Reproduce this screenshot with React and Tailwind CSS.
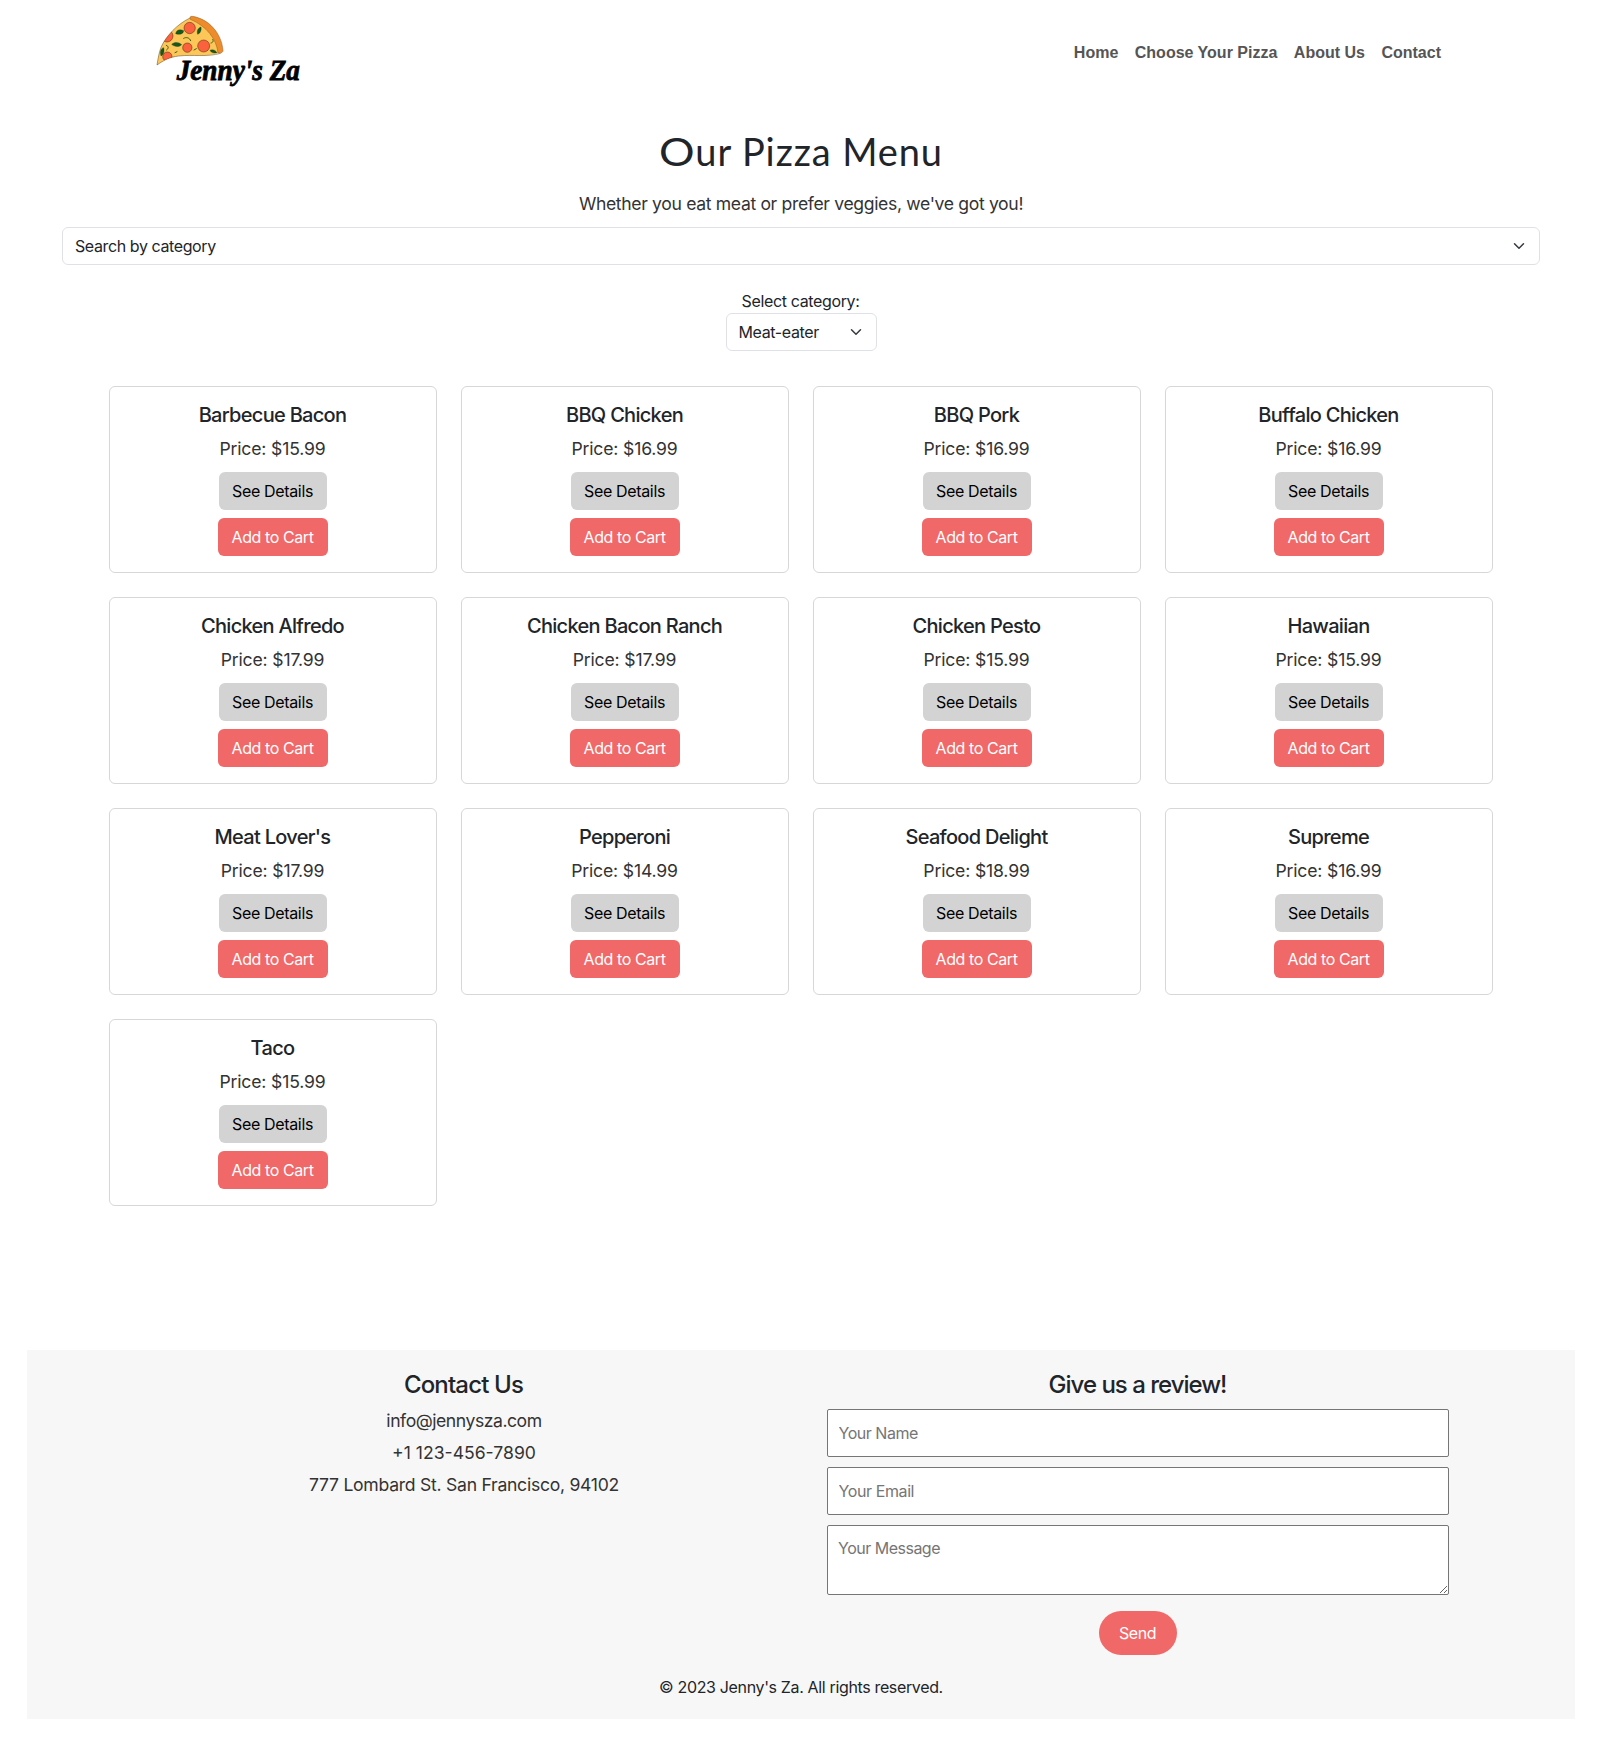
import React from 'react';

const pizzas = [
  ['Barbecue Bacon', '15.99'],
  ['BBQ Chicken', '16.99'],
  ['BBQ Pork', '16.99'],
  ['Buffalo Chicken', '16.99'],
  ['Chicken Alfredo', '17.99'],
  ['Chicken Bacon Ranch', '17.99'],
  ['Chicken Pesto', '15.99'],
  ['Hawaiian', '15.99'],
  ["Meat Lover's", '17.99'],
  ['Pepperoni', '14.99'],
  ['Seafood Delight', '18.99'],
  ['Supreme', '16.99'],
  ['Taco', '15.99'],
];

function Logo() {
  return (
    <svg width="180" height="100" viewBox="0 0 540 300" aria-label="Jenny's Za">
      <defs>
        <clipPath id="slice">
          <path d="M150 54 C112 72 78 108 63 142 C57 158 54 176 51 195 C72 180 90 171 116 168 C160 163 200 172 238 159 C232 120 205 72 150 54 Z" />
        </clipPath>
      </defs>
      <path
        d="M150 54 C112 72 78 108 63 142 C57 158 54 176 51 195 C72 180 90 171 116 168 C160 163 200 172 238 159 C232 120 205 72 150 54 Z"
        fill="#fdc659"
      />
      <g clipPath="url(#slice)" stroke="#4a2a12" strokeWidth="1.5">
        <circle cx="149" cy="84" r="17" fill="#fb613c" />
        <circle cx="81" cy="108" r="18" fill="#fb613c" />
        <circle cx="191" cy="138" r="18" fill="#fb613c" />
        <circle cx="142" cy="143" r="14" fill="#fb613c" />
        <circle cx="82" cy="170" r="14" fill="#fb613c" />
      </g>
      <g fill="#15591f" stroke="#0c3a12" strokeWidth="1">
        <path d="M107 101 C109 89 120 87 131 92 C131 101 118 106 107 101 Z" />
        <path d="M173 103 C169 92 175 83 183 81 C185 91 181 100 173 103 Z" />
        <path d="M95 133 C104 125 116 126 125 134 C116 142 104 141 95 133 Z" />
        <path d="M63 168 C59 156 62 145 71 143 C74 154 71 164 63 168 Z" />
        <path d="M210 151 C217 147 226 150 231 158 C222 161 213 158 210 151 Z" />
      </g>
      <g fill="none" stroke="#35621c" strokeWidth="3" strokeLinecap="round">
        <path d="M131 115 C139 110 149 113 152 122" />
        <path d="M79 136 C87 139 86 145 80 150" />
        <path d="M213 129 C220 128 221 122 218 118" />
        <path d="M105 158 L111 155" />
        <path d="M162 150 L169 146" />
      </g>
      <path
        d="M150 54 C112 72 78 108 63 142 C57 158 54 176 51 195 C72 180 90 171 116 168 C160 163 200 172 242 160"
        fill="none"
        stroke="#5d4320"
        strokeWidth="1.5"
      />
      <path
        d="M151 58 C148 52 151 48 157 49 C205 56 244 98 249 151 C249 157 245 160 234 159 C230 118 200 78 151 58 Z"
        fill="#ee8c2b"
        stroke="#8a5a26"
        strokeWidth="1.5"
      />
      <text
        x="110"
        y="240"
        textLength="370"
        lengthAdjust="spacingAndGlyphs"
        className="font-['Liberation_Serif',serif] text-[88px] font-bold italic"
        fill="#000"
        stroke="#000"
        strokeWidth="2.5"
      >
        Jenny's Za
      </text>
    </svg>
  );
}

function Chevron() {
  return (
    <svg width="16" height="12" viewBox="0 0 16 16" preserveAspectRatio="xMidYMid meet" className="shrink-0">
      <path fill="none" stroke="#343a40" strokeLinecap="round" strokeLinejoin="round" strokeWidth="2" d="m2 5 6 6 6-6" />
    </svg>
  );
}

function SelectBox({ label, width }) {
  return (
    <button
      type="button"
      className={`flex h-[38px] items-center justify-between rounded-md border border-[#dee2e6] bg-white pr-3 pl-3 text-base ${width}`}
    >
      <span>{label}</span>
      <Chevron />
    </button>
  );
}

function Card({ name, price }) {
  return (
    <div className="flex h-[187px] flex-col items-center rounded-md border border-[#d7d7d8] bg-white py-4">
      <h5 className="mb-2 pr-px text-[20px] leading-6 font-medium tracking-[-0.7px]">{name}</h5>
      <p className="mb-2.5 pr-px text-[17.6px] leading-[27px] tracking-[-0.16px] text-[#333]">Price: ${price}</p>
      <button className="mb-2 h-[38px] w-[108px] shrink-0 rounded-md bg-[#d3d3d3] pr-px text-base tracking-[-0.34px] text-black">
        See Details
      </button>
      <button className="h-[38px] w-[110px] shrink-0 rounded-md bg-[#f06868] pr-px text-base tracking-[-0.41px] text-white">
        Add to Cart
      </button>
    </div>
  );
}

export default function App() {
  return (
    <div className="h-[1746px] w-[1602px] bg-white font-['Inter',sans-serif] text-[#212529]">
      <header className="flex h-[127px] items-start justify-between pr-[161px] pl-[140px]">
        <Logo />
        <nav className="mt-[41px] flex gap-[16.5px] font-['Liberation_Sans',sans-serif] text-base font-bold text-[#555]">
          <a>Home</a>
          <a>Choose Your Pizza</a>
          <a>About Us</a>
          <a>Contact</a>
        </nav>
      </header>

      <main className="flex h-[1223px] flex-col items-center">
        <h1 className="font-['Lato',sans-serif] text-[38px] leading-[48px] tracking-[0.9px]">
          <span className="mr-[5px] inline-block origin-left scale-x-[1.17]">O</span>ur Pizza Menu
        </h1>
        <p className="mt-[15px] mb-[10px] text-[17.6px] leading-[27px] tracking-[-0.35px] text-[#333]">
          Whether you eat meat or prefer veggies, we've got you!
        </p>
        <div className="flex tracking-[-0.4px]">
          <SelectBox label="Search by category" width="w-[1478px]" />
        </div>
        <label className="mt-6 pr-px text-base tracking-[-0.36px]">Select category:</label>
        <div className="flex tracking-[-0.37px]">
          <SelectBox label="Meat-eater" width="w-[151px]" />
        </div>
        <div className="mt-[35px] grid w-[1384px] grid-cols-4 gap-6 text-center">
          {pizzas.map(([name, price]) => (
            <Card key={name} name={name} price={price} />
          ))}
        </div>
      </main>

      <footer className="mx-[27px] h-[369px] bg-[#f7f7f7] px-[100px] pt-5 text-center">
        <div className="grid h-[305px] grid-cols-2">
          <section>
            <h4 className="mb-2 pr-px text-2xl leading-[30px] font-medium tracking-[-0.84px]">Contact Us</h4>
            <p className="h-8 text-[17.6px] leading-[26.4px] tracking-[-0.46px] text-[#333]">info@jennysza.com</p>
            <p className="h-8 text-[17.6px] leading-[26.4px] text-[#333]">+1 123-456-7890</p>
            <p className="h-8 text-[17.6px] leading-[26.4px] tracking-[-0.27px] text-[#333]">
              777 Lombard St. San Francisco, 94102
            </p>
          </section>
          <section className="flex flex-col items-center px-[26px]">
            <h4 className="mb-[9px] pr-px text-2xl leading-[30px] font-medium tracking-[-1px]">Give us a review!</h4>
            <input
              className="mb-[10px] h-12 w-full rounded-[2px] border border-[#767676] bg-white px-[10.5px] text-base tracking-[-0.48px] placeholder:text-[#757575]"
              placeholder="Your Name"
            />
            <input
              className="mb-[10px] h-12 w-full rounded-[2px] border border-[#767676] bg-white px-[10.5px] text-base tracking-[-0.4px] placeholder:text-[#757575]"
              placeholder="Your Email"
            />
            <textarea
              className="h-[70px] w-full rounded-[2px] border border-[#767676] bg-white p-[10px] text-base tracking-[-0.5px] placeholder:text-[#757575]"
              placeholder="Your Message"
            />
            <button className="mt-4 h-11 w-[78px] rounded-[22px] bg-[#f06868] pr-px text-base tracking-[-0.45px] text-white">
              Send
            </button>
          </section>
        </div>
        <p className="text-base tracking-[-0.35px]">© 2023 Jenny's Za. All rights reserved.</p>
      </footer>
    </div>
  );
}
